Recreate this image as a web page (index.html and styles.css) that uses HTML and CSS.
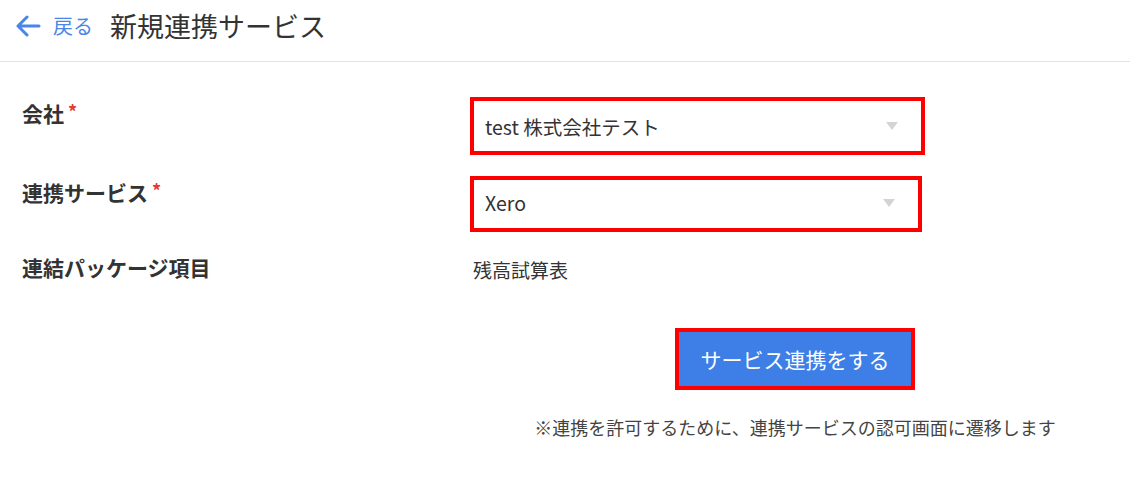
FILE: index.html
```html
<!DOCTYPE html>
<html lang="ja">
<head>
    <meta charset="utf-8" />
    <meta name="viewport" content="width=device-width, initial-scale=1.0" />
    <link rel="stylesheet" href="styles.css">
</head>
<body>
    <header class="page-header">
        <a href="#" class="back-link">
            <svg class="back-icon" width="26" height="22" viewBox="0 0 26 22">
                <path d="M24 11H3M12 2L3 11l9 9" fill="none" stroke="#4a86e8" stroke-width="3" stroke-linecap="round" stroke-linejoin="round"/>
            </svg>
            <span>戻る</span>
        </a>
        <h1 class="page-title">新規連携サービス</h1>
    </header>

    <form class="link-form" onsubmit="return false">
        <div class="form-row">
            <label class="form-label">会社<span class="required">*</span></label>
            <div class="form-field">
                <div class="select-box select-company">
                    <span class="select-value">test 株式会社テスト</span>
                    <span class="select-caret"></span>
                </div>
            </div>
        </div>
        <div class="form-row">
            <label class="form-label">連携サービス<span class="required">*</span></label>
            <div class="form-field">
                <div class="select-box select-service">
                    <span class="select-value">Xero</span>
                    <span class="select-caret"></span>
                </div>
            </div>
        </div>
        <div class="form-row">
            <label class="form-label">連結パッケージ項目</label>
            <div class="form-field">
                <div class="plain-value">残高試算表</div>
            </div>
        </div>
        <div class="form-row">
            <div></div>
            <div class="form-actions">
                <button type="submit" class="submit-btn">サービス連携をする</button>
                <p class="note">※連携を許可するために、連携サービスの認可画面に遷移します</p>
            </div>
        </div>
    </form>
</body>
</html>
```

FILE: styles.css
```css
:root {
    --font-family: "Noto Sans CJK JP", "Noto Sans", sans-serif;
    --font-color: #333;
    --link-color: #4a86e8;
    --button-color: #3d7fe6;
    --highlight: #ff0000;
    --caret-color: #d4d4d4;
    --divider: #e2e2e2;
}

body {
    margin: 0;
    font-family: var(--font-family);
    color: var(--font-color);
    background: #fff;
}

.page-header {
    display: flex;
    align-items: center;
    height: 62px;
    padding-left: 15px;
    border-bottom: 1px solid var(--divider);
    box-sizing: border-box;
}

.back-link {
    display: flex;
    align-items: center;
    color: var(--link-color);
    text-decoration: none;
    font-size: 20px;
    margin-right: 17px;
    margin-top: -10px;
}

.back-icon {
    margin-right: 12px;
}

.page-title {
    margin: 0;
    font-size: 27px;
    font-weight: 400;
    margin-top: -10px;
}

.link-form {
    padding: 35px 10px 0 22px;
}

.form-row {
    display: grid;
    grid-template-columns: 448px 1fr;
    margin-bottom: 21px;
}

.form-label {
    font-size: 21px;
    font-weight: 700;
    line-height: 29px;
}

.required {
    color: #e53935;
    margin-left: 4px;
    font-size: 18px;
    vertical-align: 3px;
}

.select-box {
    display: flex;
    align-items: center;
    justify-content: space-between;
    border: 4px solid var(--highlight);
    box-sizing: border-box;
    padding: 0 23px 0 11px;
    font-size: 19.5px;
}

.select-company {
    width: 455px;
    height: 58px;
}

.select-service {
    width: 452px;
    height: 56px;
    padding-bottom: 3px;
}

.select-caret {
    width: 0;
    height: 0;
    border-left: 6px solid transparent;
    border-right: 6px solid transparent;
    border-top: 8px solid var(--caret-color);
}

.plain-value {
    font-size: 19px;
    line-height: 29px;
    padding-left: 3px;
    padding-top: 2px;
}

.form-row:nth-child(3) {
    margin-bottom: 0;
    margin-top: 2px;
}

.form-actions {
    display: flex;
    flex-direction: column;
    align-items: center;
    padding-top: 44px;
}

.submit-btn {
    width: 240px;
    height: 62px;
    background-color: var(--button-color);
    color: #fff;
    border: 4px solid var(--highlight);
    font-family: var(--font-family);
    font-size: 21px;
    cursor: pointer;
}

.note {
    margin: 24px 0 0;
    font-size: 18px;
    color: #444;
}
```
